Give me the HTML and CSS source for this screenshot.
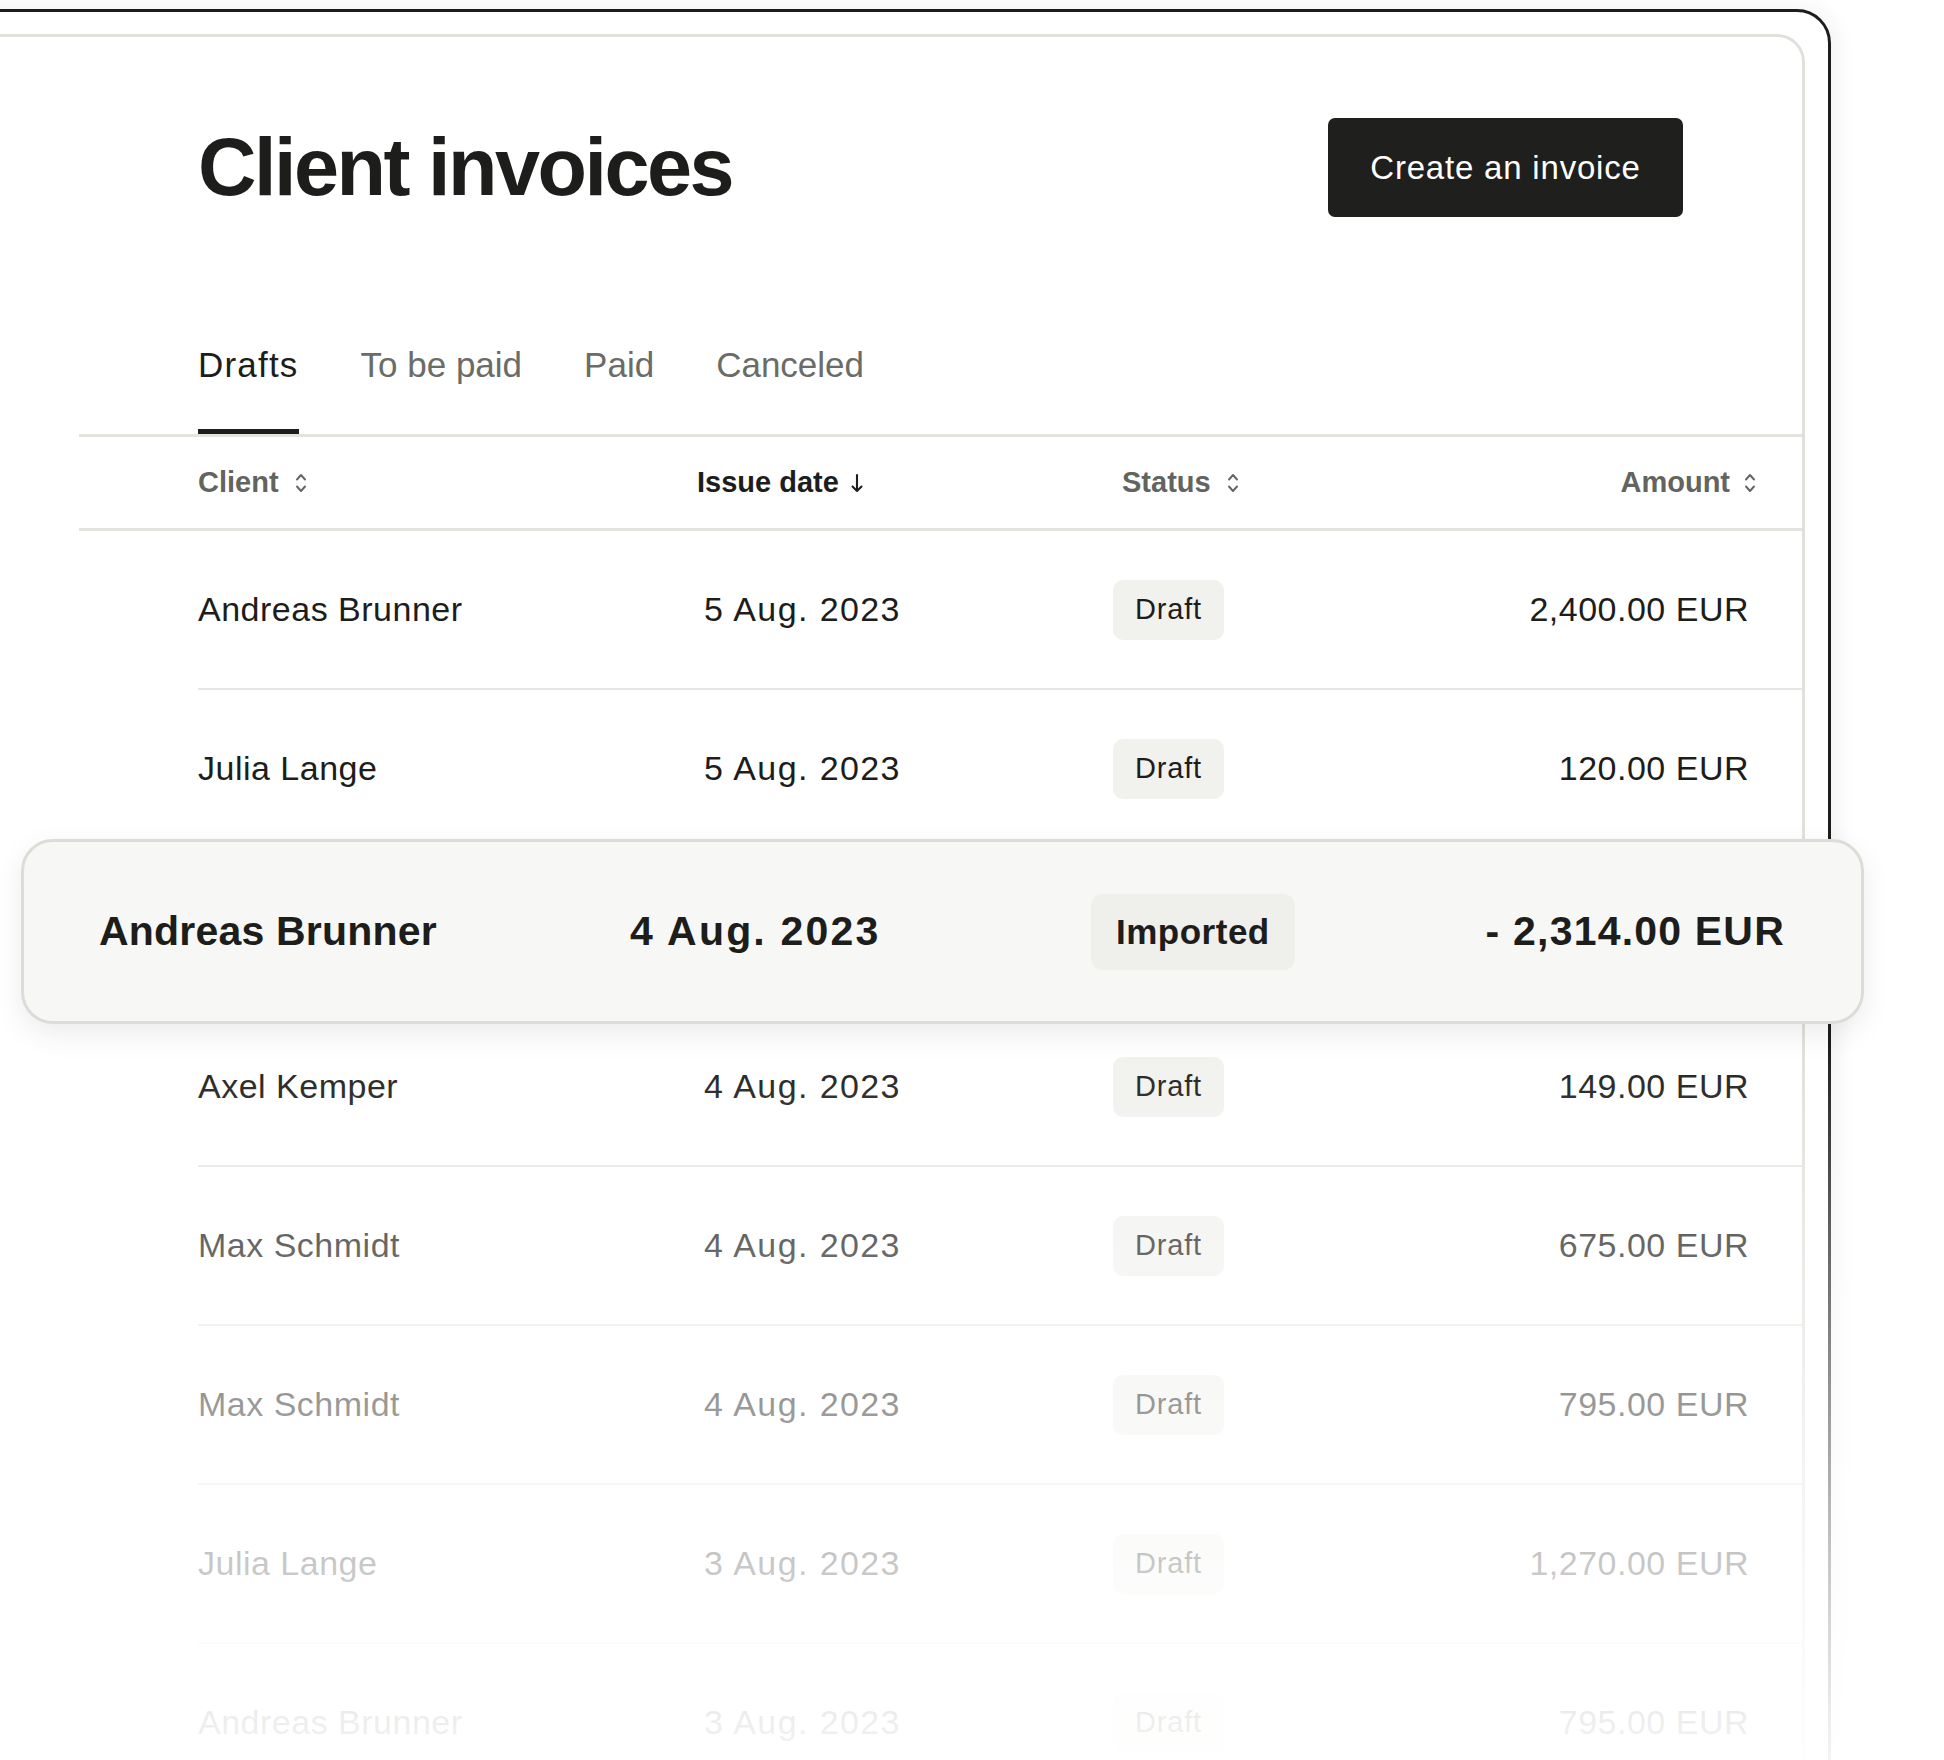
FILE: index.html
```html
<!DOCTYPE html>
<html lang="en">
<head>
<meta charset="utf-8">
<title>Client invoices</title>
<link rel="stylesheet" href="styles.css">
</head>
<body>
<div class="device">
  <div class="panel">
    <div class="title-row">
      <h1 class="title">Client invoices</h1>
      <button class="btn-create">Create an invoice</button>
    </div>

    <nav class="tabs">
      <span class="tab tab-active">Drafts</span>
      <span class="tab">To be paid</span>
      <span class="tab">Paid</span>
      <span class="tab">Canceled</span>
    </nav>

    <div class="thead">
      <div class="th">Client
        <svg class="sort-icon" width="12" height="22" viewBox="0 0 12 22"><path d="M2 7.5 L6 3 L10 7.5 M2 14.5 L6 19 L10 14.5" fill="none" stroke="currentColor" stroke-width="1.9" stroke-linecap="round" stroke-linejoin="round"/></svg>
      </div>
      <div class="th th-active">Issue date
        <svg class="arrow-icon" width="14" height="22" viewBox="0 0 14 22"><path d="M7 3 V19 M2.5 14.5 L7 19 L11.5 14.5" fill="none" stroke="currentColor" stroke-width="2.1" stroke-linecap="round" stroke-linejoin="round"/></svg>
      </div>
      <div class="th">Status
        <svg class="sort-icon" width="12" height="22" viewBox="0 0 12 22"><path d="M2 7.5 L6 3 L10 7.5 M2 14.5 L6 19 L10 14.5" fill="none" stroke="currentColor" stroke-width="1.9" stroke-linecap="round" stroke-linejoin="round"/></svg>
      </div>
      <div class="th th-right">Amount
        <svg class="sort-icon" width="12" height="22" viewBox="0 0 12 22"><path d="M2 7.5 L6 3 L10 7.5 M2 14.5 L6 19 L10 14.5" fill="none" stroke="currentColor" stroke-width="1.9" stroke-linecap="round" stroke-linejoin="round"/></svg>
      </div>
    </div>

    <div class="tbody">
      <div class="row">
        <div class="cell-name">Andreas Brunner</div>
        <div class="cell-date">5 Aug. 2023</div>
        <div><span class="badge">Draft</span></div>
        <div class="cell-amount">2,400.00 EUR</div>
      </div>
      <div class="row">
        <div class="cell-name">Julia Lange</div>
        <div class="cell-date">5 Aug. 2023</div>
        <div><span class="badge">Draft</span></div>
        <div class="cell-amount">120.00 EUR</div>
      </div>
      <div class="row row-lifted">
        <div class="card">
          <div class="card-name">Andreas Brunner</div>
          <div class="card-date">4 Aug. 2023</div>
          <div><span class="card-badge">Imported</span></div>
          <div class="card-amount">- 2,314.00 EUR</div>
        </div>
      </div>
      <div class="row">
        <div class="cell-name">Axel Kemper</div>
        <div class="cell-date">4 Aug. 2023</div>
        <div><span class="badge">Draft</span></div>
        <div class="cell-amount">149.00 EUR</div>
      </div>
      <div class="row">
        <div class="cell-name">Max Schmidt</div>
        <div class="cell-date">4 Aug. 2023</div>
        <div><span class="badge">Draft</span></div>
        <div class="cell-amount">675.00 EUR</div>
      </div>
      <div class="row">
        <div class="cell-name">Max Schmidt</div>
        <div class="cell-date">4 Aug. 2023</div>
        <div><span class="badge">Draft</span></div>
        <div class="cell-amount">795.00 EUR</div>
      </div>
      <div class="row">
        <div class="cell-name">Julia Lange</div>
        <div class="cell-date">3 Aug. 2023</div>
        <div><span class="badge">Draft</span></div>
        <div class="cell-amount">1,270.00 EUR</div>
      </div>
      <div class="row">
        <div class="cell-name">Andreas Brunner</div>
        <div class="cell-date">3 Aug. 2023</div>
        <div><span class="badge">Draft</span></div>
        <div class="cell-amount">795.00 EUR</div>
      </div>
    </div>
  </div>
</div>
<div class="fade"></div>
</body>
</html>
```

FILE: styles.css
```css
html {
  background: #ffffff;
}

body {
  margin: 0;
  width: 1944px;
  height: 1760px;
  overflow: hidden;
  position: relative;
  background: #ffffff;
  font-family: "Liberation Sans", Arial, sans-serif;
  color: #1d1d1b;
}

.device {
  box-sizing: border-box;
  margin: 9px 0 0 -100px;
  width: 1931px;
  height: 1900px;
  border: 3px solid #1d1d1b;
  border-radius: 34px;
  padding: 22px 23px 0 22px;
  box-shadow: 6px 0 22px rgba(0, 0, 0, 0.06);
}

.panel {
  box-sizing: border-box;
  height: 100%;
  border: 3px solid #e0e0dc;
  border-radius: 28px;
  padding-left: 151px;
}

.title-row {
  display: flex;
  justify-content: space-between;
  align-items: center;
  padding: 81px 119px 0 119px;
}

.title {
  margin: 0;
  font-size: 81px;
  line-height: 1;
  font-weight: 700;
  letter-spacing: -2.5px;
  color: #1d1d1b;
}

.btn-create {
  box-sizing: border-box;
  width: 355px;
  height: 99px;
  border: none;
  border-radius: 7px;
  background: #1f1f1d;
  color: #ffffff;
  font-family: "Liberation Sans", Arial, sans-serif;
  font-size: 33px;
  letter-spacing: 0.8px;
  padding: 0;
}

.tabs {
  display: flex;
  gap: 62px;
  margin-top: 127px;
  padding-left: 119px;
  border-bottom: 3px solid #e3e3df;
}

.tab {
  font-size: 35px;
  line-height: 42px;
  color: #6b6b67;
  padding-bottom: 43px;
  border-bottom: 5px solid transparent;
}

.tab-active {
  color: #1d1d1b;
  letter-spacing: 1.2px;
  border-bottom-color: #1d1d1b;
}

.thead {
  display: grid;
  grid-template-columns: 499px 425px auto 1fr;
  align-items: center;
  height: 91px;
  padding: 0 46px 0 119px;
  border-bottom: 3px solid #e3e3df;
  font-size: 29px;
  font-weight: 700;
  color: #636360;
}

.th {
  display: flex;
  align-items: center;
  gap: 16px;
}

.th-active {
  color: #1d1d1b;
  gap: 11px;
}

.th-right {
  justify-content: flex-end;
  gap: 14px;
}

.sort-icon,
.arrow-icon {
  display: block;
}

.tbody {
  margin-left: 119px;
}

.row {
  display: grid;
  grid-template-columns: 506px 409px auto 1fr;
  align-items: center;
  height: 157px;
  padding-right: 53px;
  border-bottom: 2px solid #e6e6e2;
  font-size: 34px;
  color: #1d1d1b;
}

.row-lifted {
  position: relative;
}

.cell-name {
  letter-spacing: 0.5px;
}

.cell-date {
  letter-spacing: 1.4px;
}

.cell-amount {
  grid-column: 4;
  text-align: right;
  letter-spacing: 0.5px;
}

.badge {
  display: inline-flex;
  align-items: center;
  height: 60px;
  padding: 0 22px;
  border-radius: 10px;
  background: #f1f1ee;
  font-size: 29px;
  letter-spacing: 0.8px;
}

.card {
  position: absolute;
  top: -10px;
  left: -177px;
  width: 1843px;
  height: 185px;
  box-sizing: border-box;
  display: grid;
  grid-template-columns: 531px 461px auto 1fr;
  align-items: center;
  padding: 0 76px 0 75px;
  border: 3px solid #dcdcd8;
  border-radius: 32px;
  background: #f7f7f5;
  box-shadow: 0 10px 30px rgba(0, 0, 0, 0.08);
  font-size: 41px;
  font-weight: 700;
  color: #1d1d1b;
}

.card-name {
  letter-spacing: 0.2px;
}

.card-date {
  letter-spacing: 2.2px;
}

.card-badge {
  display: inline-flex;
  align-items: center;
  height: 76px;
  padding: 0 25px;
  border-radius: 12px;
  background: #efefeb;
  font-size: 35px;
  letter-spacing: 0.5px;
}

.card-amount {
  text-align: right;
  letter-spacing: 1.2px;
}

.fade {
  position: absolute;
  left: 0;
  top: 1000px;
  width: 100%;
  height: 760px;
  pointer-events: none;
  background: linear-gradient(
    to bottom,
    rgba(255, 255, 255, 0) 0px,
    rgba(255, 255, 255, 0) 40px,
    rgba(255, 255, 255, 0.32) 243px,
    rgba(255, 255, 255, 0.54) 401px,
    rgba(255, 255, 255, 0.75) 560px,
    rgba(255, 255, 255, 0.92) 719px,
    rgba(255, 255, 255, 0.95) 760px
  );
}
```
